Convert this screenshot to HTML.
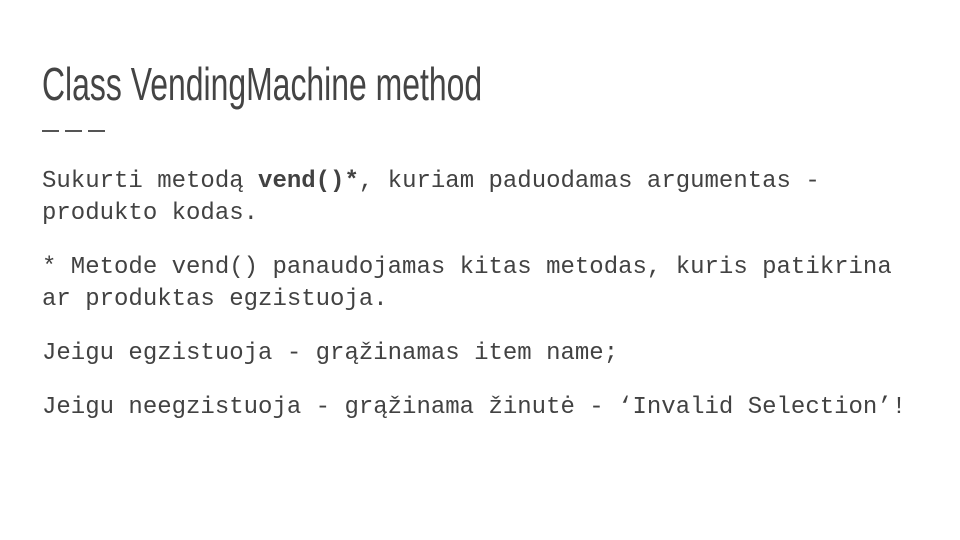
<!DOCTYPE html>
<html><head><meta charset="utf-8"><style>
html,body{margin:0;padding:0;background:#fff;}
body{width:960px;height:540px;position:relative;overflow:hidden;color:#434343;}
.title{position:absolute;left:42px;top:59px;font-family:"Liberation Sans",sans-serif;font-size:46px;line-height:50px;white-space:nowrap;transform:scaleX(0.694);transform-origin:0 0;color:#444;}
.dash{position:absolute;top:130px;height:2px;width:17px;background:#555;}
.body{position:absolute;left:42px;top:166px;font-family:"Liberation Mono",monospace;font-size:24px;line-height:32px;white-space:pre;color:#424242;}
.body p{margin:0 0 22px 0;}
b{font-weight:bold;}
</style></head><body>
<div class="title">Class VendingMachine method</div>
<div class="dash" style="left:42px"></div>
<div class="dash" style="left:65px"></div>
<div class="dash" style="left:88px"></div>
<div class="body"><p>Sukurti metodą <b>vend()*</b>, kuriam paduodamas argumentas -
produkto kodas.</p><p>* Metode vend() panaudojamas kitas metodas, kuris patikrina
ar produktas egzistuoja.</p><p>Jeigu egzistuoja - grąžinamas item name;</p><p>Jeigu neegzistuoja - grąžinama žinutė - ‘Invalid Selection’!</p></div>
</body></html>
